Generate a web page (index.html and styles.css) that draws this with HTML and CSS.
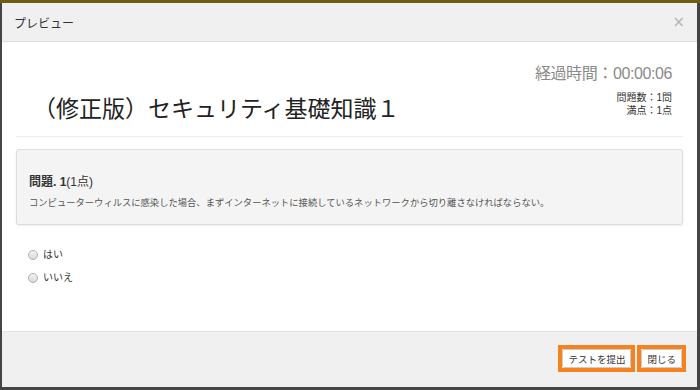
FILE: index.html
```html
<!DOCTYPE html>
<html lang="ja">
<head>
    <meta charset="UTF-8">
    <title>プレビュー</title>
    <link rel="stylesheet" href="styles.css">
</head>
<body>
    <div class="modal">
        <div class="modal-header">
            <span class="modal-title">プレビュー</span>
            <span class="close">×</span>
        </div>

        <div class="modal-body">
            <div class="test-head">
                <h1 class="test-title">（修正版）セキュリティ基礎知識１</h1>
                <div class="test-info">
                    <div class="elapsed">経過時間：00:00:06</div>
                    <div class="counts">問題数：1問<br>満点：1点</div>
                </div>
            </div>

            <div class="question">
                <div class="question-title"><b>問題. 1</b>(1点)</div>
                <div class="question-text">コンピューターウィルスに感染した場合、まずインターネットに接続しているネットワークから切り離さなければならない。</div>
            </div>

            <div class="answers">
                <label><span class="radio"></span>はい</label>
                <label><span class="radio"></span>いいえ</label>
            </div>
        </div>

        <div class="modal-footer">
            <span class="mark"><button>テストを提出</button></span>
            <span class="mark"><button>閉じる</button></span>
        </div>
    </div>
</body>
</html>
```

FILE: styles.css
```css
* {
    box-sizing: border-box;
}
body {
    margin: 0;
    padding: 3px 3px 3px 2px;
    height: 390px;
    background: linear-gradient(#6e5d14 0 3px, #454545 3px);
    font-family: "Liberation Sans", "Noto Sans CJK JP", sans-serif;
    color: #333;
}
.modal {
    height: 384px;
    background-color: #ffffff;
    display: flex;
    flex-direction: column;
}
.modal-header {
    height: 39px;
    background-color: #f0f0f0;
    border-bottom: 1px solid #dddddd;
    display: flex;
    align-items: center;
    justify-content: space-between;
    padding: 0 12px 0 12px;
}
.modal-title {
    font-size: 12px;
    color: #333;
}
.close {
    font-size: 15px;
    color: #b5b5b5;
    font-family: "DejaVu Sans", sans-serif;
}
.modal-body {
    flex: 1;
    padding: 0 14px;
}
.test-head {
    display: flex;
    justify-content: space-between;
    align-items: flex-start;
    border-bottom: 1px solid #eeeeee;
    height: 95px;
}
.test-title {
    font-weight: normal;
    font-size: 23px;
    margin: 48px 0 0 17px;
    color: #222;
    font-family: "Noto Sans CJK JP", sans-serif;
}
.test-info {
    text-align: right;
    padding-right: 11px;
    padding-top: 18px;
}
.elapsed {
    font-size: 16px;
    color: #8a8a8a;
    letter-spacing: -0.4px;
}
.counts {
    font-size: 10px;
    line-height: 13px;
    margin-top: 7px;
    color: #333;
}
.question {
    margin-top: 12px;
    background-color: #f4f4f4;
    border: 1px solid #dddddd;
    border-radius: 3px;
    box-shadow: 0 1px 2px rgba(0, 0, 0, 0.08);
    padding: 22px 12px 14px 12px;
    height: 76px;
}
.question-title {
    font-size: 12px;
    color: #333;
}
.question-text {
    font-size: 9.3px;
    color: #555;
    margin-top: 6px;
    font-family: "Noto Sans CJK JP", sans-serif;
}
.answers {
    margin-top: 17px;
    padding-left: 12px;
}
.answers label {
    display: flex;
    align-items: center;
    font-size: 10px;
    color: #333;
    height: 23px;
    font-family: "Noto Sans CJK JP", sans-serif;
}
.radio {
    width: 10px;
    height: 10px;
    border: 1px solid #b0b0b0;
    border-radius: 50%;
    background: linear-gradient(#f4f4f4, #d8d8d8);
    margin: 3px 5px 0 0;
}
.modal-footer {
    height: 56px;
    background-color: #f0f0f0;
    border-top: 1px solid #e2e2e2;
    display: flex;
    justify-content: flex-end;
    align-items: flex-start;
    gap: 2px;
    padding: 13px 11px 0 0;
}
.mark {
    border: 4px solid #f5821f;
    display: flex;
}
.mark button {
    font-family: "Noto Sans CJK JP", sans-serif;
    font-size: 9.5px;
    color: #333;
    background-color: #ffffff;
    border: 1px solid #cccccc;
    border-radius: 2px;
    height: 19px;
    padding: 0 5px;
    margin: 0;
}
```
